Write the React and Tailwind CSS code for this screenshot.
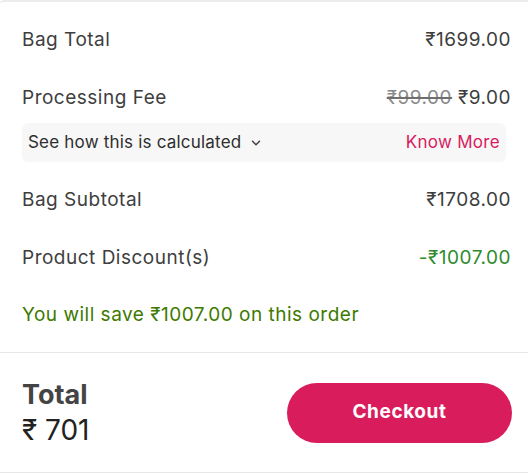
export default function App() {
  return (
    <div
      className="w-[528px] h-[475px] bg-white text-[#3e3e3e] overflow-hidden"
      style={{ fontFamily: 'Inter, "Noto Sans", "DejaVu Sans", sans-serif' }}
    >
      <div className="border-t-2 border-[#ececec] rounded-tl-[4px]">
        <div className="px-[22px] pr-[17px]">
          <div className="flex items-center justify-between h-[39px] mt-[19px] text-[19px] tracking-[0.5px]">
            <span>Bag Total</span>
            <span>₹1699.00</span>
          </div>
          <div className="flex items-center justify-between h-[39px] mt-[19px] text-[19px] tracking-[0.5px]">
            <span>Processing Fee</span>
            <span>
              <span className="line-through text-[#8a8a8a] decoration-[#6f6f6f] decoration-2">₹99.00</span> ₹9.00
            </span>
          </div>
          <div className="flex items-center justify-between h-[39px] mt-[5px] mr-[5px] bg-[#f7f7f7] rounded-[6px] pl-[6px] pr-[6px]">
            <span className="flex items-center gap-[8px] text-[17px] tracking-[0.2px] text-[#2e2e2e]">
              See how this is calculated
              <svg width="14" height="14" viewBox="0 0 24 24" fill="none" stroke="#3e3e3e" strokeWidth="2.5" strokeLinecap="round" strokeLinejoin="round">
                <path d="M6 9l6 6 6-6" />
              </svg>
            </span>
            <span className="text-[17px] tracking-[0.3px] text-[#d81b60]">Know More</span>
          </div>
          <div className="flex items-center justify-between h-[39px] mt-[19px] text-[19px] tracking-[0.5px]">
            <span>Bag Subtotal</span>
            <span>₹1708.00</span>
          </div>
          <div className="flex items-center justify-between h-[39px] mt-[19px] text-[19px] tracking-[0.5px]">
            <span>Product Discount(s)</span>
            <span className="text-[#2e8b2e]">-₹1007.00</span>
          </div>
          <div className="flex items-center h-[39px] mt-[18px] text-[19px] tracking-[0.5px] text-[#3d7a00]">
            You will save ₹1007.00 on this order
          </div>
        </div>
        <div className="border-t border-[#e6e6e6] mt-[17px] border-b h-[121px] flex items-center justify-between pl-[22px] pr-[16px]">
          <div className="flex flex-col gap-[6px]">
            <span className="text-[27px] leading-[28px] font-bold text-[#444]">Total</span>
            <span className="text-[28px] leading-[30px] text-[#222]">₹ 701</span>
          </div>
          <button className="w-[225px] h-[60px] rounded-full bg-[#d91c5c] text-white text-[19px] tracking-[0.6px] font-bold">
            Checkout
          </button>
        </div>
      </div>
    </div>
  );
}
